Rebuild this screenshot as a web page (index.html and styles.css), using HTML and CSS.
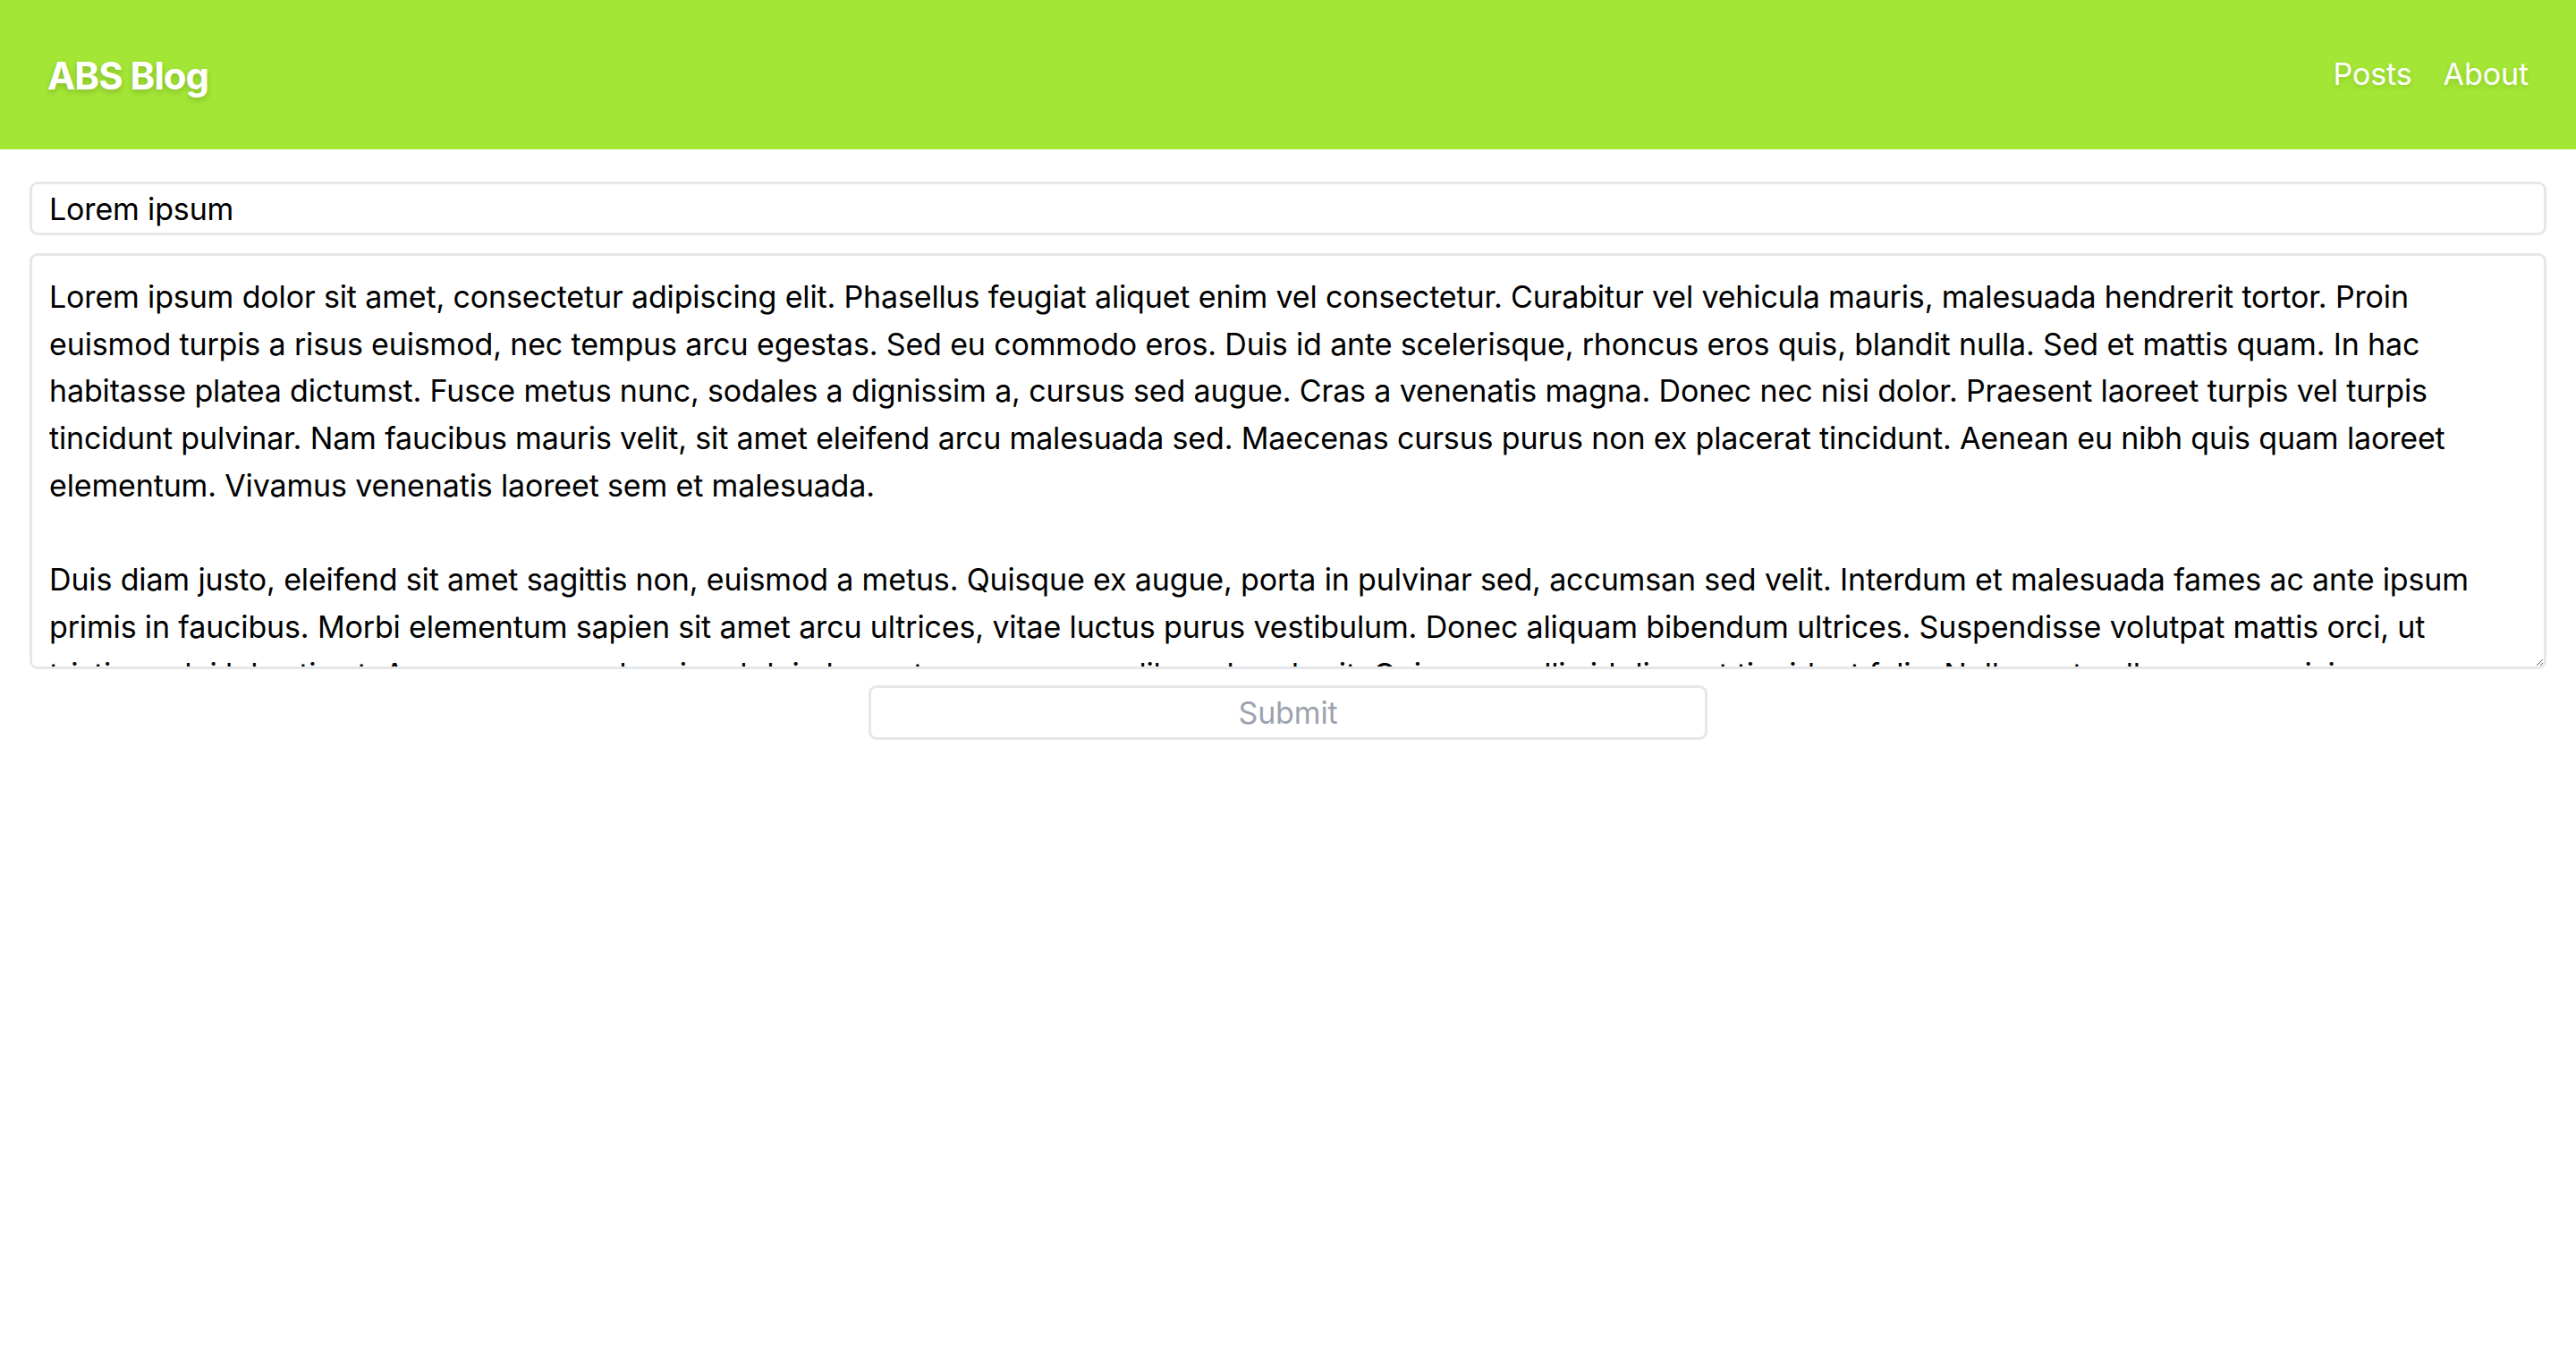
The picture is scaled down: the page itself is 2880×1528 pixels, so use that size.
FILE: index.html
```html
<!DOCTYPE html>
<html lang="en">
<head>
<meta charset="utf-8">
<title>ABS Blog</title>
<link rel="stylesheet" href="styles.css">
</head>
<body>
<header class="site-header">
  <a class="brand" href="#">ABS Blog</a>
  <nav class="nav">
    <a class="nav-link" href="#">Posts</a>
    <a class="nav-link" href="#">About</a>
  </nav>
</header>
<main class="editor">
  <form class="post-form">
    <input class="title-input" type="text" value="Lorem ipsum">
    <textarea class="body-input">Lorem ipsum dolor sit amet, consectetur adipiscing elit. Phasellus feugiat aliquet enim vel consectetur. Curabitur vel vehicula mauris, malesuada hendrerit tortor. Proin euismod turpis a risus euismod, nec tempus arcu egestas. Sed eu commodo eros. Duis id ante scelerisque, rhoncus eros quis, blandit nulla. Sed et mattis quam. In hac habitasse platea dictumst. Fusce metus nunc, sodales a dignissim a, cursus sed augue. Cras a venenatis magna. Donec nec nisi dolor. Praesent laoreet turpis vel turpis tincidunt pulvinar. Nam faucibus mauris velit, sit amet eleifend arcu malesuada sed. Maecenas cursus purus non ex placerat tincidunt. Aenean eu nibh quis quam laoreet elementum. Vivamus venenatis laoreet sem et malesuada.

Duis diam justo, eleifend sit amet sagittis non, euismod a metus. Quisque ex augue, porta in pulvinar sed, accumsan sed velit. Interdum et malesuada fames ac ante ipsum primis in faucibus. Morbi elementum sapien sit amet arcu ultrices, vitae luctus purus vestibulum. Donec aliquam bibendum ultrices. Suspendisse volutpat mattis orci, ut tristique dui lobortis at. Aenean commodo mi sed dui placerat, eu accumsan libero hendrerit. Quisque mollis id diam at tincidunt felis. Nulla porta ullamcorper nisi.</textarea>
    <button class="submit-btn" type="submit">Submit</button>
  </form>
</main>
</body>
</html>
```

FILE: styles.css
```css
* {
  box-sizing: border-box;
}

html, body {
  margin: 0;
  padding: 0;
  background: #ffffff;
  font-family: Inter, "Noto Sans", sans-serif;
  color: #000000;
}

.site-header {
  display: flex;
  align-items: center;
  justify-content: space-between;
  height: 167px;
  padding: 0 53px 0 53px;
  background: #a3e635;
}

.brand {
  color: #ffffff;
  text-decoration: none;
  font-size: 42px;
  font-weight: 700;
  letter-spacing: -1px;
  text-shadow: 0 3px 6px rgba(0, 0, 0, 0.18);
  margin-top: 2px;
}

.nav {
  display: flex;
  gap: 35px;
  margin-top: -2px;
}

.nav-link {
  color: #ffffff;
  text-decoration: none;
  font-size: 34px;
  letter-spacing: -0.1px;
  text-shadow: 0 3px 6px rgba(0, 0, 0, 0.12);
}

.editor {
  padding: 36px 33px;
}

.post-form {
  display: flex;
  flex-direction: column;
}

.title-input,
.body-input,
.submit-btn {
  font-family: Inter, "Noto Sans", sans-serif;
  font-size: 34px;
  letter-spacing: -0.15px;
  border: 3px solid #e5e7eb;
  border-radius: 9px;
  background: #ffffff;
  outline: none;
}

.title-input {
  display: block;
  width: 100%;
  height: 60px;
  padding: 0 19px;
  color: #000000;
}

.body-input {
  display: block;
  width: 100%;
  height: 465px;
  margin-top: 20px;
  padding: 20px 19px 18px 19px;
  line-height: 52.7px;
  color: #000000;
  resize: both;
  scrollbar-width: none;
}

.body-input::-webkit-scrollbar {
  display: none;
}

.submit-btn {
  display: block;
  width: 33.333%;
  height: 61px;
  margin: 18px auto 0 auto;
  color: #9ca3af;
  padding: 0;
}
```
